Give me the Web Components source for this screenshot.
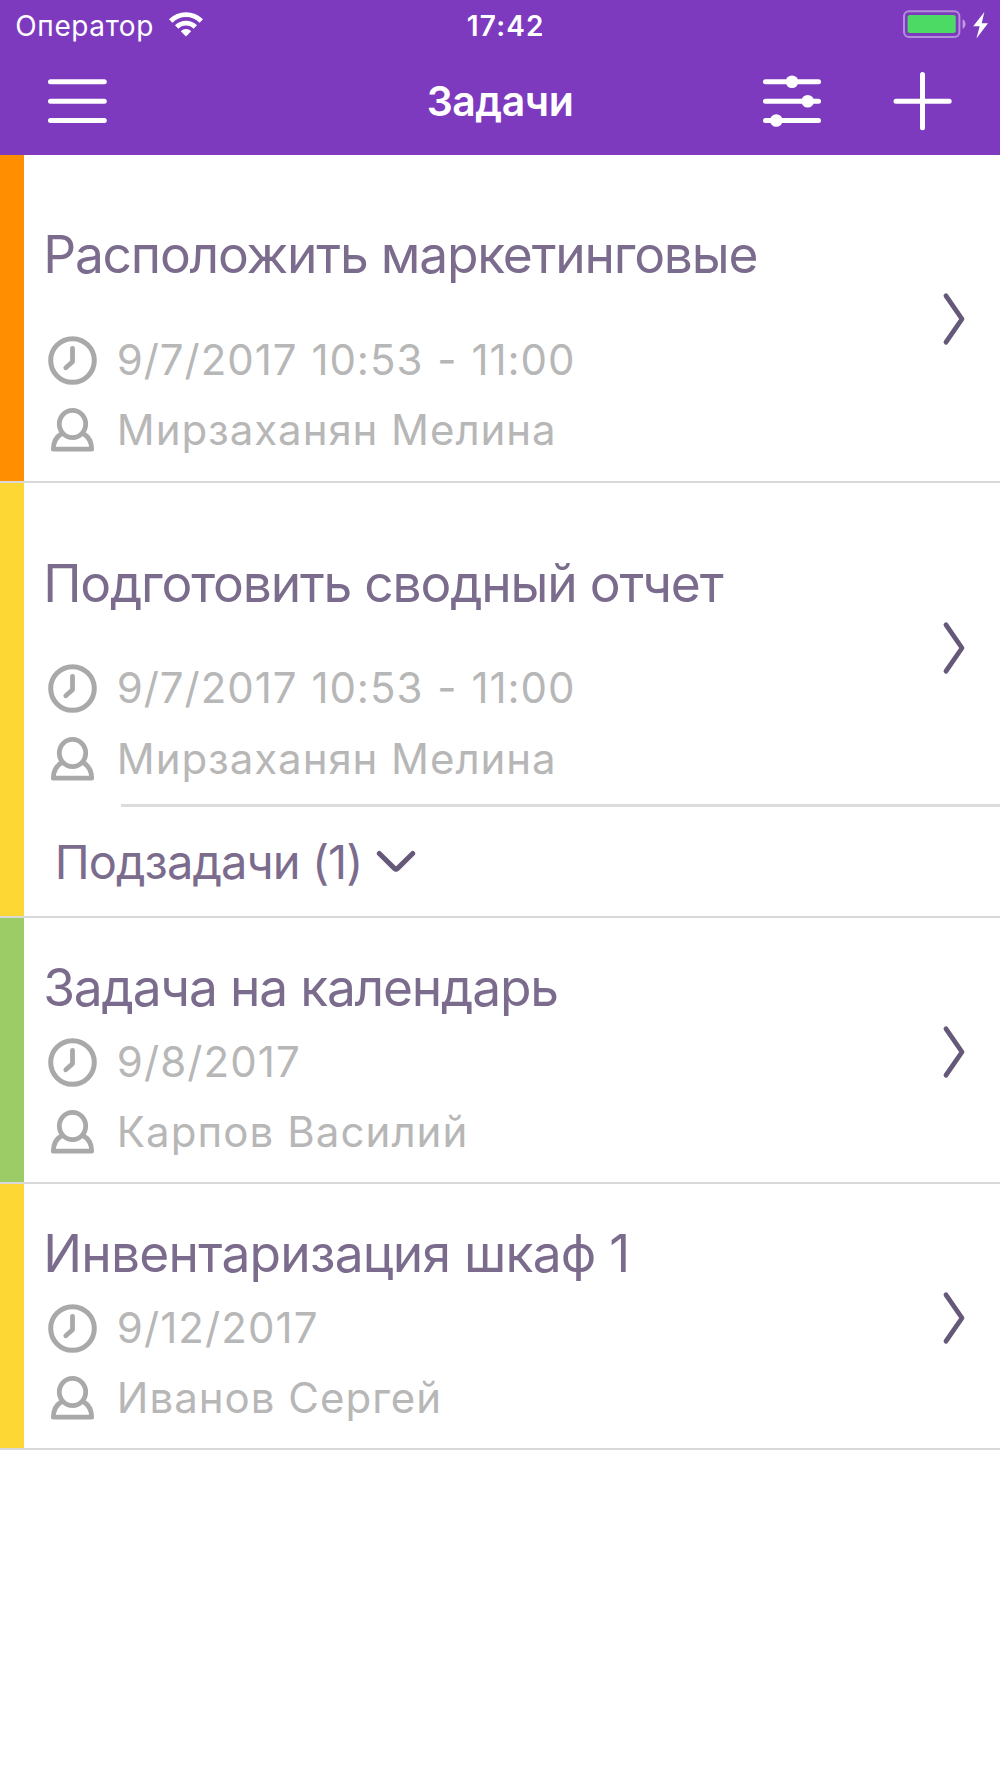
<!DOCTYPE html>
<html lang="ru">
<head>
<meta charset="utf-8">
<title>Задачи</title>
<style>
    html, body {
        margin: 0;
        background: #fff;
    }

    body {
        width: 1000px;
        min-height: 1778px;
        font-family: Inter, "Liberation Sans", sans-serif;
    }
</style>
</head>
<body>
<app-header>
    <status-bar slot="status" carrier="Оператор" time="17:42"></status-bar>
    Задачи
</app-header>
<task-list>
    <task-item tall style="--bar: #ff8f00; --name-spacing: 0.93px; --date-spacing: 0.95px; --top: 69.3px">
        Расположить маркетинговые
        <task-meta slot="meta" icon="clock">9/7/2017 10:53 - 11:00</task-meta>
        <task-meta slot="meta" icon="person">Мирзаханян Мелина</task-meta>
    </task-item>
    <task-item tall style="--bar: #fdd835; --name-spacing: 0.93px; --date-spacing: 0.95px">
        Подготовить сводный отчет
        <task-meta slot="meta" icon="clock">9/7/2017 10:53 - 11:00</task-meta>
        <task-meta slot="meta" icon="person">Мирзаханян Мелина</task-meta>
        <sub-tasks slot="sub">Подзадачи (1)</sub-tasks>
    </task-item>
    <task-item style="--bar: #9ccc65; --name-spacing: 1.07px">
        Задача на календарь
        <task-meta slot="meta" icon="clock">9/8/2017</task-meta>
        <task-meta slot="meta" icon="person">Карпов Василий</task-meta>
    </task-item>
    <task-item style="--bar: #fdd835; --title-spacing: -0.77px">
        Инвентаризация шкаф 1
        <task-meta slot="meta" icon="clock">9/12/2017</task-meta>
        <task-meta slot="meta" icon="person">Иванов Сергей</task-meta>
    </task-item>
</task-list>

<script>
const icons = {
    menu: `<svg width="64" height="64" viewBox="0 0 64 64" fill="none" stroke="#fff" stroke-width="5" stroke-linecap="round">
        <path d="M5.5 12.8H59.3M5.5 32.2H59.3M5.5 51.5H59.3"/></svg>`,
    filter: `<svg width="64" height="64" viewBox="0 0 64 64" stroke="#fff" stroke-width="5" stroke-linecap="round">
        <path d="M5.5 12.8H58.5M5.5 32.2H58.5M5.5 51.5H58.5"/>
        <g fill="#fff" stroke="none"><circle cx="32" cy="12.8" r="6.3"/><circle cx="47.7" cy="32.2" r="6.3"/><circle cx="16.3" cy="51.5" r="6.3"/></g></svg>`,
    plus: `<svg width="64" height="64" viewBox="0 0 64 64" fill="none" stroke="#fff" stroke-width="5" stroke-linecap="round">
        <path d="M6 32.2H59.2M32.5 5.6V58.8"/></svg>`,
    wifi: `<svg width="34" height="25" viewBox="0 0 34 25" fill="none" stroke="#fff" stroke-width="4.9">
        <path d="M1.7 9A21.6 21.6 0 0 1 32.3 9"/><path d="M7.7 15A13.2 13.2 0 0 1 26.3 15"/>
        <path fill="#fff" stroke="none" d="M17 24.4L11.8 19.2A7.3 7.3 0 0 1 22.2 19.2Z"/></svg>`,
    battery: `<svg width="63" height="28" viewBox="0 0 63 28">
        <rect x="1" y="1.3" width="55.4" height="25.6" rx="5" fill="none" stroke="#fff" stroke-opacity=".42" stroke-width="2"/>
        <rect x="4.6" y="5" width="48.2" height="18" rx="2.5" fill="#4cd964"/>
        <path fill="#fff" fill-opacity=".5" d="M59.6 9.3A5.4 5.4 0 0 1 59.6 18.9Z"/></svg>`,
    bolt: `<svg width="16" height="27" viewBox="0 0 16 27" fill="#fff"><path d="M11.4 0L.2 14.2H6.7L3.4 26.4L15 11.2H8.7Z"/></svg>`,
    clock: `<svg width="50" height="50" viewBox="0 0 50 50" fill="none" stroke="#a9a9a9" stroke-linecap="round" stroke-linejoin="round">
        <circle cx="25.5" cy="25.5" r="21.8" stroke-width="5"/><path stroke-width="4.8" d="M25.5 13.3V26.8L18.8 32.8"/></svg>`,
    person: `<svg width="50" height="50" viewBox="0 0 50 50" fill="none" stroke="#a9a9a9" stroke-width="4.8" stroke-linejoin="round">
        <ellipse cx="25.5" cy="19" rx="13.2" ry="13.7"/><path d="M14.8 28.7C8.8 32.1 6.4 37.6 6.3 44.2H44.7C44.6 37.6 42.2 32.1 36.2 28.7"/></svg>`,
    next: `<svg width="24" height="56" viewBox="0 0 24 56" fill="none" stroke="#655878" stroke-width="4.8" stroke-linecap="round" stroke-linejoin="round">
        <path d="M4 4.8L20 28L4 51.2"/></svg>`,
    down: `<svg width="40" height="24" viewBox="0 0 40 24" fill="none" stroke="#655878" stroke-width="5" stroke-linecap="round" stroke-linejoin="round">
        <path d="M3.3 3.5L18.4 18.4Q20 19.9 21.6 18.4L36.7 3.5"/></svg>`
};

class BaseElement extends HTMLElement {
    constructor() {
        super();
        this.attachShadow({ mode: "open" });
    }

    connectedCallback() {
        this.shadowRoot.innerHTML = this.render();
    }
}

class StatusBar extends BaseElement {
    render() {
        return `
            <style>
                :host {
                    display: grid;
                    grid-template-columns: 1fr auto 1fr;
                    height: 50px;
                    line-height: 52px;
                    font-size: 28px;
                }
                svg { display: block; flex: none; }
                .left, .right { display: flex; align-items: flex-start; }
                .left { padding-left: 15.3px; letter-spacing: 0.61px; }
                .left svg { margin: 12px 0 0 15px; }
                .time { width: 89px; padding-left: 11.3px; box-sizing: border-box; font-weight: 600; letter-spacing: 1.15px; }
                .right { justify-content: flex-end; gap: 7px; padding: 10.3px 11px 0 0; }
                .bolt { margin-top: 1.4px; }
            </style>
            <div class="left"><span>${this.getAttribute("carrier")}</span>${icons.wifi}</div>
            <div class="time">${this.getAttribute("time")}</div>
            <div class="right">${icons.battery}<span class="bolt">${icons.bolt}</span></div>
        `;
    }
}

class AppHeader extends BaseElement {
    render() {
        return `
            <style>
                :host {
                    display: block;
                    height: 155px;
                    background: #7e3abf;
                    color: #fff;
                }
                svg { display: block; }
                nav {
                    display: grid;
                    grid-template-columns: 1fr auto 1fr;
                    align-items: center;
                    height: 101px;
                }
                h1 {
                    margin: 0;
                    font-size: 41px;
                    line-height: 103px;
                    font-weight: 600;
                    letter-spacing: -0.45px;
                }
                .left, .right { margin-bottom: 2px; }
                .left { padding-left: 45px; }
                .right { display: flex; justify-content: flex-end; gap: 66px; padding-right: 46px; }
            </style>
            <slot name="status"></slot>
            <nav>
                <div class="left">${icons.menu}</div>
                <h1><slot></slot></h1>
                <div class="right">${icons.filter}${icons.plus}</div>
            </nav>
        `;
    }
}

class TaskList extends BaseElement {
    render() {
        return `
            <style>
                :host { display: flex; flex-direction: column; }
            </style>
            <slot></slot>
        `;
    }
}

class TaskItem extends BaseElement {
    render() {
        return `
            <style>
                :host {
                    display: block;
                    border-bottom: 2px solid #d9d9d9;
                }
                .body { border-left: 24px solid var(--bar); }
                .main {
                    display: flex;
                    align-items: flex-start;
                    justify-content: space-between;
                    padding: 38.8px 34.5px 24.9px 19.2px;
                }
                h2 {
                    margin: 0 0 20px;
                    font-size: 51.5px;
                    line-height: 60px;
                    font-weight: 400;
                    letter-spacing: var(--title-spacing, -1.2px);
                    color: #7b6c8d;
                    white-space: nowrap;
                }
                .next { margin-top: 66.9px; }
                svg { display: block; }
                :host([tall]) .main {
                    padding-top: var(--top, 69.8px);
                    padding-bottom: calc(95.3px - var(--top, 69.8px));
                }
                :host([tall]) h2 { margin-bottom: 50.5px; }
            </style>
            <div class="body">
                <div class="main">
                    <div>
                        <h2><slot></slot></h2>
                        <slot name="meta"></slot>
                    </div>
                    <div class="next">${icons.next}</div>
                </div>
                <slot name="sub"></slot>
            </div>
        `;
    }
}

class TaskMeta extends BaseElement {
    render() {
        return `
            <style>
                :host {
                    display: flex;
                    gap: 19.6px;
                    height: 50px;
                    margin: 0 0 20.3px 4px;
                    font-size: 42px;
                    line-height: 50px;
                    letter-spacing: var(--date-spacing, 1.1px);
                    word-spacing: 1.2px;
                    color: #b7b7b7;
                    white-space: nowrap;
                }
                :host([icon="person"]) {
                    margin-bottom: 0;
                    letter-spacing: var(--name-spacing, 1px);
                    word-spacing: 0;
                }
                svg { display: block; flex: none; }
            </style>
            ${icons[this.getAttribute("icon")]}
            <span><slot></slot></span>
        `;
    }
}

class SubTasks extends BaseElement {
    render() {
        return `
            <style>
                :host {
                    display: block;
                    height: 112px;
                    margin-top: -5px;
                    color: #7b6c8d;
                }
                .line { height: 2.5px; margin-left: 97px; background: #dcdcdc; }
                .row {
                    display: flex;
                    align-items: center;
                    gap: 13px;
                    height: 109.5px;
                    padding-left: 30.7px;
                    font-size: 47px;
                    letter-spacing: -0.91px;
                }
                svg { display: block; margin-top: 2px; }
            </style>
            <div class="line"></div>
            <div class="row"><span><slot></slot></span>${icons.down}</div>
        `;
    }
}

customElements.define("status-bar", StatusBar);
customElements.define("app-header", AppHeader);
customElements.define("task-list", TaskList);
customElements.define("task-item", TaskItem);
customElements.define("task-meta", TaskMeta);
customElements.define("sub-tasks", SubTasks);
</script>
</body>
</html>
